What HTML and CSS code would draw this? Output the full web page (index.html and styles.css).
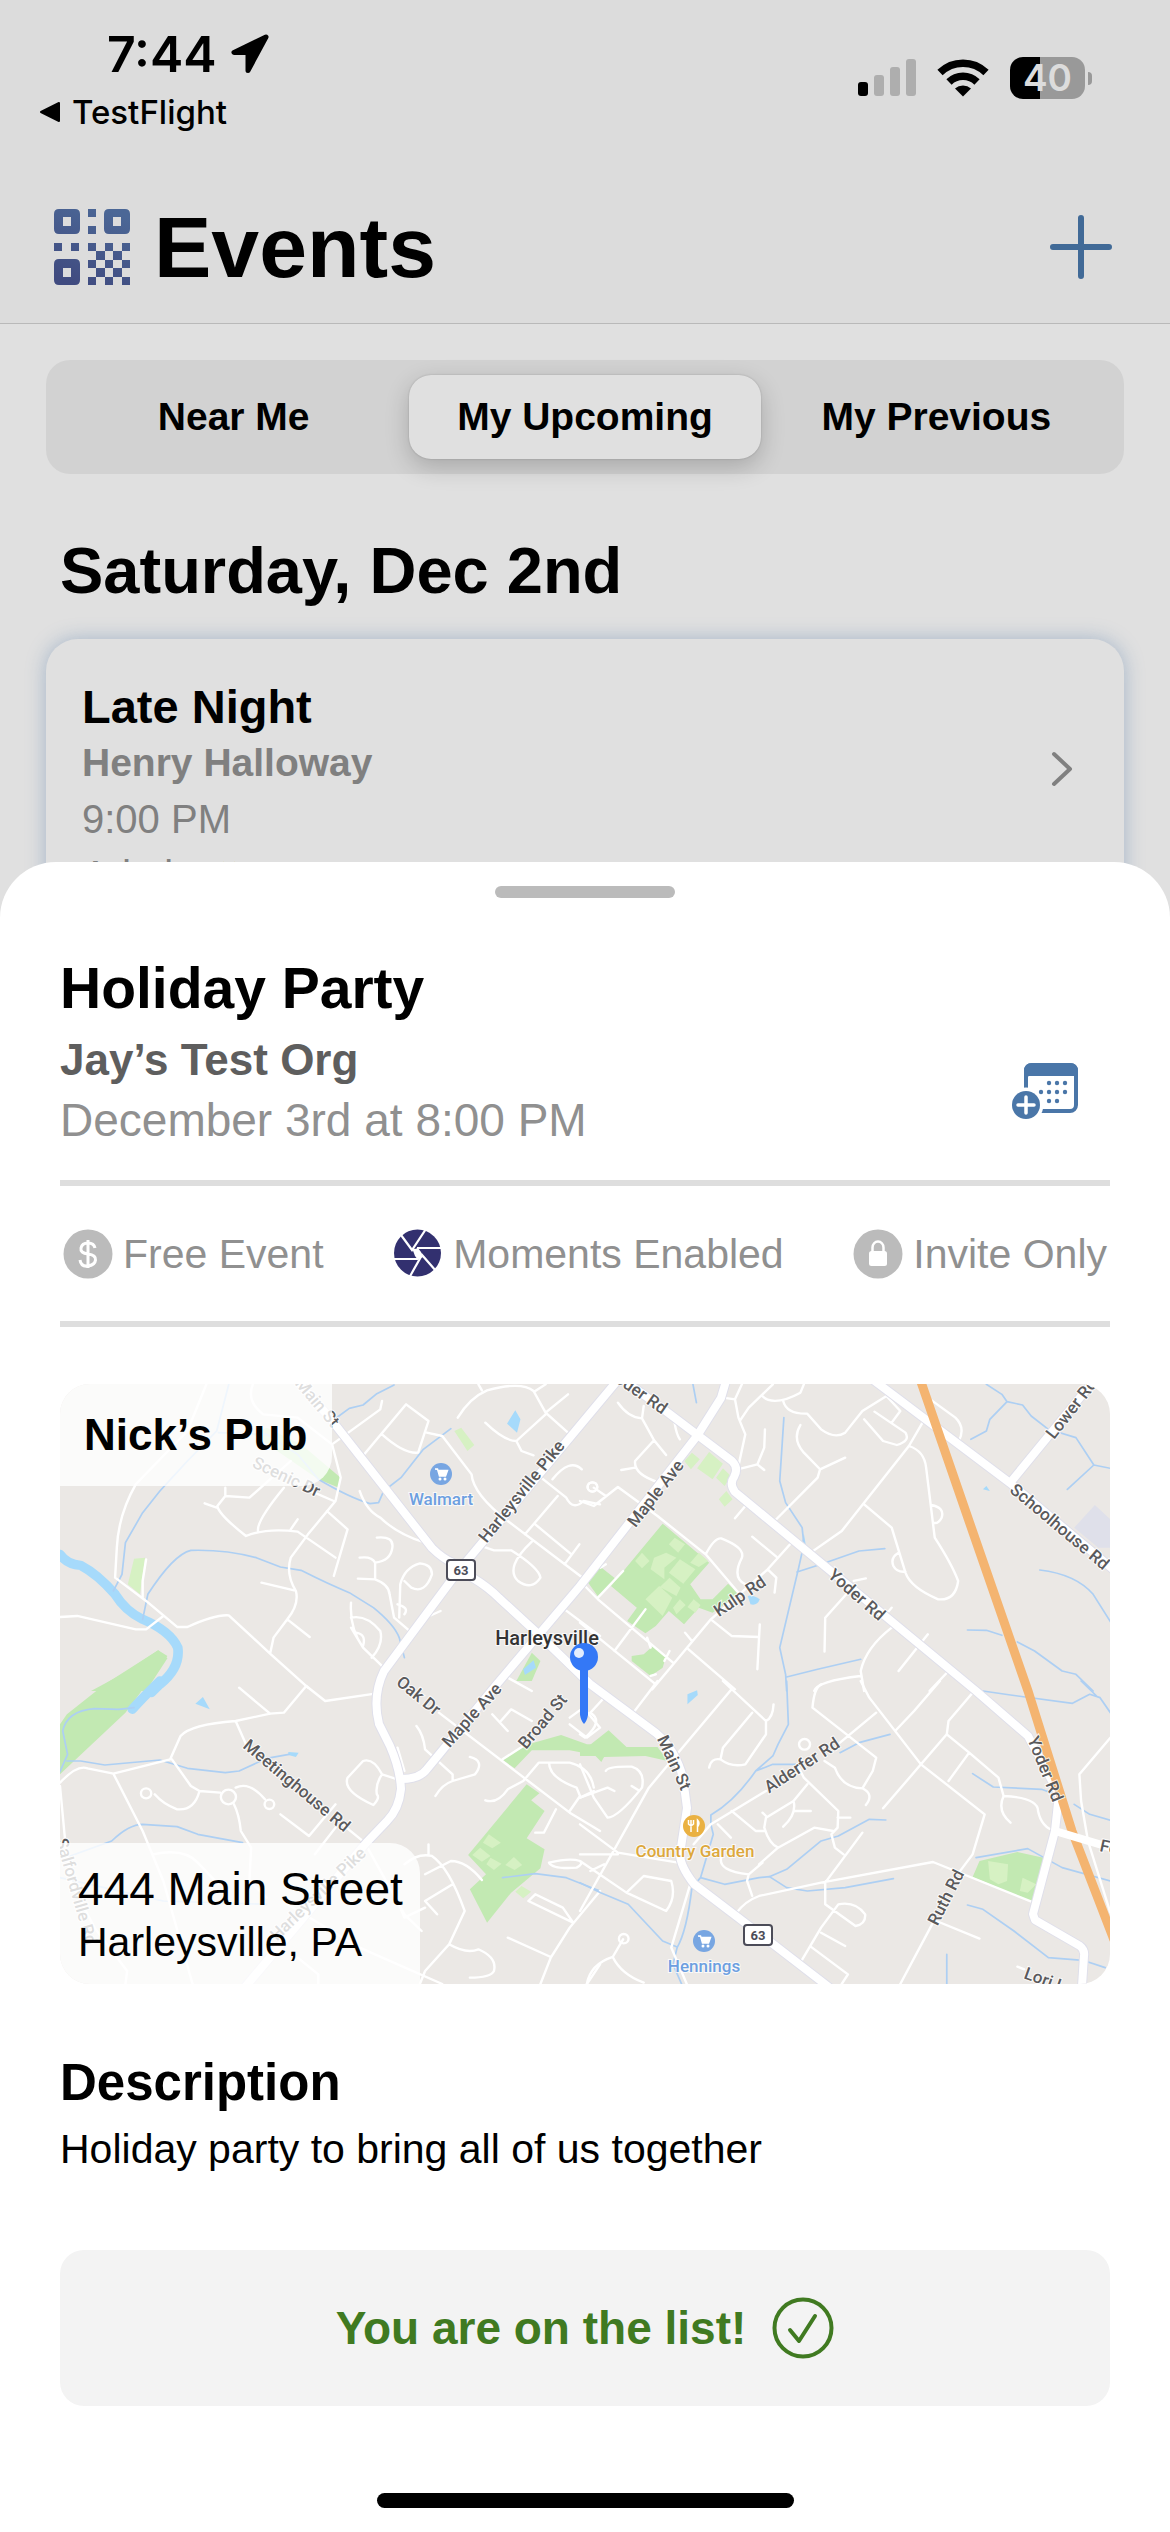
FILE: index.html
```html
<!DOCTYPE html>
<html lang="en">
<head>
<meta charset="utf-8">
<meta name="viewport" content="width=device-width, initial-scale=1">
<title>Events</title>
<link rel="stylesheet" href="styles.css">
</head>
<body>
<div class="app">
  <div class="page">
    <div class="status">
      <div class="status-left">
        <div class="clock">7:44
          <svg width="42" height="42" viewBox="0 0 42 42" aria-hidden="true"><path d="M37 4 5 19.500h14v18L37 4Z" fill="#000" stroke="#000" stroke-width="5" stroke-linejoin="round"/></svg>
        </div>
        <a class="back" href="#"><svg width="22" height="22" viewBox="0 0 22 22" aria-hidden="true"><path d="M20 2v18L2 11Z" stroke="#000" stroke-width="2" stroke-linejoin="round"/></svg>TestFlight</a>
      </div>
      <div class="status-right">
        <svg width="58" height="38" viewBox="0 0 58 38" aria-hidden="true"><rect y="23" width="10" height="14" rx="3"/><g fill="#aeaeae"><rect x="16" y="16" width="10" height="21" rx="3"/><rect x="32" y="8" width="10" height="29" rx="3"/><rect x="48" width="10" height="37" rx="3"/></g></svg>
        <svg width="52" height="38" viewBox="0 0 52 38" aria-hidden="true"><g fill="none" stroke="#000" stroke-width="7.500"><path d="M3 13.500a33 33 0 0 1 46 0"/><path d="M12 23a20 20 0 0 1 28 0"/></g><path d="M18 29.500a12 12 0 0 1 16 0L26 37.500Z"/></svg>
        <div class="battery"><span class="battery-level">40</span><span class="battery-nub"></span></div>
      </div>
    </div>
    <header class="header">
      <svg width="76" height="76" viewBox="0 0 76 76" aria-hidden="true">
        <defs><linearGradient id="qr" x1=".7" y1="0" x2=".3" y2="1"><stop offset="0" stop-color="#4b6796"/><stop offset="1" stop-color="#404b80"/></linearGradient></defs>
        <path fill="url(#qr)" fill-rule="evenodd" d="M5 0h16q5 0 5 5v15q0 5-5 5H5q-5 0-5-5V5q0-5 5-5Zm4 8v9h8V8ZM55 0h16q5 0 5 5v15q0 5-5 5H55q-5 0-5-5V5q0-5 5-5Zm4 8v9h8V8ZM5 50h16q5 0 5 5v16q0 5-5 5H5q-5 0-5-5V55q0-5 5-5Zm4 9v9h8v-9ZM34 0h8v8h-8ZM34 17h8v8h-8ZM0 34h8v8H0ZM17 34h8v8h-8ZM34 34h8v8h-8ZM51 34h8v8h-8ZM68 34h8v8h-8ZM42 42h9v9h-9ZM59 42h9v9h-9ZM34 51h8v8h-8ZM51 51h8v8h-8ZM68 51h8v8h-8ZM42 59h9v9h-9ZM59 59h9v9h-9ZM34 68h8v8h-8ZM51 68h8v8h-8ZM68 68h8v8h-8Z"/>
      </svg>
      <h1>Events</h1>
      <button class="icon-button" type="button" aria-label="Add event"><svg width="64" height="64" viewBox="0 0 64 64" aria-hidden="true"><path d="M32 3v58M4 32h56" stroke="#416a97" stroke-width="6" stroke-linecap="round"/></svg></button>
    </header>
    <div class="tabs" role="tablist">
      <button type="button" role="tab" aria-selected="false">Near Me</button>
      <button type="button" role="tab" aria-selected="true">My Upcoming</button>
      <button type="button" role="tab" aria-selected="false">My Previous</button>
    </div>
    <h2 class="day">Saturday, Dec 2nd</h2>
    <article class="event">
      <div class="event-text">
        <h3>Late Night</h3>
        <p class="host">Henry Halloway</p>
        <p>9:00 PM</p>
        <p>Admin <svg width="36" height="30" viewBox="0 0 40 30" aria-hidden="true"><path d="M3 8l8 7 5-14 4 12 8-12 3 14 7-7-4 20H6Z" fill="#d8c94a"/></svg></p>
      </div>
      <svg class="chevron" width="24" height="38" viewBox="0 0 24 38" aria-hidden="true"><path d="M4 4 20 19 4 34" fill="none" stroke="#808080" stroke-width="4" stroke-linecap="round" stroke-linejoin="round"/></svg>
    </article>
  </div>

  <section class="sheet" role="dialog" aria-label="Holiday Party">
    <div class="grabber"></div>
    <div class="summary">
      <div>
        <h2>Holiday Party</h2>
        <p class="org">Jay’s Test Org</p>
        <p class="when">December 3rd at 8:00 PM</p>
      </div>
      <button class="icon-button" type="button" aria-label="Add to calendar">
        <svg width="66" height="56" viewBox="0 0 66 56" aria-hidden="true">
          <rect x="14" y="2" width="50" height="46" rx="6" fill="#fff" stroke="#4a76a8" stroke-width="4"/>
          <path d="M12 8q0-8 8-8h38q8 0 8 8v8l-4-3H17l-5 3Z" fill="#4a76a8"/>
          <g fill="#4a76a8"><circle cx="37" cy="20" r="2.200"/><circle cx="45" cy="20" r="2.200"/><circle cx="53" cy="20" r="2.200"/><circle cx="29" cy="29" r="2.200"/><circle cx="37" cy="29" r="2.200"/><circle cx="45" cy="29" r="2.200"/><circle cx="53" cy="29" r="2.200"/><circle cx="37" cy="38" r="2.200"/><circle cx="45" cy="38" r="2.200"/></g>
          <circle cx="14" cy="42" r="17.500" fill="#fff"/><circle cx="14" cy="42" r="14" fill="#4a76a8"/>
          <path d="M14 34v16M6 42h16" stroke="#fff" stroke-width="3.500" stroke-linecap="round"/>
        </svg>
      </button>
    </div>
    <ul class="facts">
      <li><svg width="50" height="50" viewBox="0 0 50 50" aria-hidden="true"><circle cx="25" cy="25" r="24.500" fill="#bbb"/><path d="M32 19q-1-5-7-5t-7 5 7 6 7.500 6-7.500 6-8-6M25 11v28" fill="none" stroke="#fff" stroke-width="3"/></svg>Free Event</li>
      <li><svg width="50" height="50" viewBox="0 0 50 50" aria-hidden="true"><circle cx="24.500" cy="24" r="23.500" fill="#32306f"/><path d="M8 6 19 21 33 0M49 19H24M43 42 29 26 16 49M0 30H25" fill="none" stroke="#fff" stroke-width="2.200"/><path d="M19 19 22 20 25 19 28 23 30.500 28 27 29 25 31 22 27Z" fill="#fff"/></svg>Moments Enabled</li>
      <li><svg width="50" height="50" viewBox="0 0 50 50" aria-hidden="true"><circle cx="25" cy="25" r="24.500" fill="#bbb"/><rect x="16" y="22" width="18" height="15" rx="2.500" fill="#fff"/><path d="M19.500 23v-4.500a5.500 6 0 0 1 11 0V23" fill="none" stroke="#fff" stroke-width="2.500"/></svg>Invite Only</li>
    </ul>

    <div class="map">
      <svg class="map-canvas" viewBox="0 0 1050 600" preserveAspectRatio="xMidYMid slice" role="img" aria-label="Map of Harleysville">
        <defs>
          <g id="cart"><path d="M-6-5h2.500l2 7h6l2-5.500h-9" fill="#fff" stroke="#fff" stroke-width="1.500"/><circle cx="-1" cy="5" r="1.500" fill="#fff"/><circle cx="4" cy="5" r="1.500" fill="#fff"/></g>
        </defs>
        <rect width="1050" height="600" fill="#ebe8e5"/>
        <!-- northwest tile -->
        <g transform="translate(0 -3) scale(.3444 .3333)">
          <path class="park" d="M600 140 700 190 815 290 810 320 750 295 560 160ZM90 930 180 880 285 808 312 832 250 930ZM1535 600 1568 560V650Z"/>
          <path class="park" d="M1370 815 1395 840 1370 900H1325Z"/>
          <path class="lawn" d="M1145 150 1165 140 1203 192 1183 210ZM215 533 247 530 232 640 197 610Z"/>
          <path class="lake" d="M1322 88 1337 115 1327 155 1298 128ZM1345 865 1375 838 1382 860 1350 882Z"/>
          <path class="river" d="M0 520Q20 550 60 553 110 580 160 640 190 690 240 715 320 750 342 800 350 860 290 910L265 935"/>
          <path class="creek" d="M490 10 455 150 370 240 290 330 240 395 190 485 180 580 155 630M240 715 255 640Q330 520 380 508 480 505 570 530L640 558 700 568Q780 610 840 635L910 680Q970 730 985 770L1000 830M970 12 920 38 880 72 840 82 790 120M1135 143 1055 205 990 290 940 330 925 365 900 368Q840 350 750 295L690 220 600 160 460 155"/>
          <path class="street" d="M425 10 370 150 220 310Q170 400 165 500L160 590 250 660 340 738 370 738Q450 700 490 703L560 770 610 818 720 920M250 535 240 600 240 650M0 708 50 705 220 745 250 745 300 705M560 10Q540 60 590 100L690 110 790 190 815 290 800 360 720 460 670 530Q655 580 685 630 695 670 660 715L620 770 610 818M660 715 725 768M585 605 680 628M480 320 480 345 457 375Q460 400 540 465 600 440 690 452M480 345 550 350 670 240M420 367 455 380M690 452 800 530M575 450Q570 420 650 320M670 445 690 415M775 390 835 445 795 585M705 320 795 360M790 190 930 85 935 60M875 230 1005 70 1070 120 1040 215Q1000 220 935 160M1065 155 1110 165 1195 280Q1200 340 1300 420L1530 600M1155 110Q1190 50 1240 28 1340 0 1375 30L1410 95 1475 155M1215 10 1225 28M1380 30 1410 10M1410 95 1475 40M1235 125Q1290 180 1325 180L1410 100M1325 180 1340 210 1375 223M1385 280 1470 350Q1490 390 1520 360L1568 370M1430 295Q1480 230 1515 265M1350 460 1445 345M1380 430 1485 520M1465 550 1508 490M1210 490 1260 508 1310 508Q1390 560 1395 590 1370 630 1330 600 1290 560 1370 482M870 330Q890 390 930 410 980 460 1060 485M920 470Q970 465 965 500 960 540 915 545 905 525 870 530M915 545 915 595 865 593M915 595Q955 610 957 640L970 710 1015 750M985 710 988 610Q1000 560 1045 547 1080 550 1080 580 1060 640 1020 620L1000 600M980 670Q1015 680 1000 700M845 665Q840 740 880 800M845 710Q890 700 930 750 940 790 905 830M860 755Q890 760 880 795M845 740 880 800 940 860M1040 720 1105 690M1465 685 1568 765M1300 890 1370 930"/>
          <circle class="street" cx="1546" cy="318" r="14"/>
        </g>
        <!-- northeast tile -->
        <g transform="translate(520 -3) scale(.3444 .3333)">
          <path class="park" d="M240 428 375 545 320 610 350 655 385 655 430 608 460 640 385 695 345 680 302 730 258 690 220 735 190 757 137 720 165 680 90 615ZM20 600 60 558 105 595 55 650ZM150 825 185 820 212 795 250 825 240 860 205 885 150 840Z"/>
          <path class="lawn" d="M325 215 348 235 322 265 303 240ZM375 213 415 248 385 295 340 262ZM415 262 438 285 420 315 395 290ZM425 330 443 355 420 377 403 355ZM180 515 202 540 180 562 160 540ZM275 470 305 490 285 515 258 490ZM345 515 372 540 345 558 320 545ZM215 530 250 515 280 530 245 560 245 595 205 565ZM290 535 335 565 300 608 258 575ZM260 590 292 620 280 645 232 618ZM190 655 230 615 268 650 240 705ZM290 655 307 672 280 700 270 680ZM330 655 350 672 335 695 312 678Z"/>
          <path class="lake" d="M650 458 657 500 642 500ZM1170 325 1180 315 1190 330ZM487 645Q500 640 522 655 515 675 495 670Z"/>
          <path fill="#dfe0ea" d="M1495 372 1540 415V500H1505L1435 440Z"/>
          <path class="creek" d="M328 10 338 65M592 110 580 300 597 365 645 440 650 490 635 560 580 800 597 880 600 930M630 573 700 550 810 510 885 503M600 888 690 865 815 835M1180 10 1225 40 1240 62 1190 115 1180 150 1135 175M1240 62 1285 72 1310 105 1360 145 1440 170 1492 252 1540 262M1492 252 1415 325M1335 567Q1440 580 1490 640L1540 722M1125 747 1180 748 1225 763M1270 783 1320 810 1400 870 1440 880 1490 930"/>
          <path class="street" d="M110 65Q140 110 180 112L215 178 250 222M180 112 185 75M215 178 160 240Q155 280 230 305M120 267 160 260M275 127Q280 160 290 175M415 50 450 55 470 10M450 55 460 110 480 160 458 265 515 250 535 200 537 145M515 250 535 267M465 118 490 80 560 10M527 43Q560 80 640 35L650 10M590 60Q600 100 660 98L700 145Q740 175 770 155L820 90 890 45M640 132Q615 175 650 215L697 265 690 290 565 420M697 265 770 230M1000 115 955 195 760 450 670 515M855 92 945 155Q960 180 920 192L880 180 825 115M890 45 930 90 905 125M955 195Q1000 210 1005 260L1030 470Q1080 550 1098 600 1090 660 1040 655 960 620 945 575L905 440 825 370M1020 372Q1060 380 1050 410 1040 430 1025 425M925 515Q900 530 910 555 920 575 945 572M1010 50 1090 110Q1120 140 1100 180M0 360 40 375 110 318 225 405 365 520 460 635M40 320 75 345M365 520Q390 470 410 472 480 500 470 530 440 590 480 610M500 467 570 527M610 490 545 565 570 590 565 635M545 565 380 715 210 925M380 715 440 765 520 768M522 730 515 865M450 412 480 375M60 560 75 550M125 570 52 650M0 600 52 655 270 845M0 725 220 910M100 810 190 685M315 805 450 925M305 755 325 780M795 600 830 592M790 620 712 710 710 812M885 705 905 680M905 740Q830 800 815 870L825 930M815 885Q690 900 680 930M1010 760 925 870M1070 870 1015 930M195 770 205 800M245 840 260 810M205 885 220 880"/>
          <circle class="street" cx="36" cy="318" r="14"/>
        </g>
        <!-- southwest tile -->
        <g transform="translate(0 297) scale(.3444 .3333)">
          <path class="park" d="M285-92 130 10 20 100 0 130V280L190 95 312-75ZM1283 235 1360 190 1455 162 1530 190 1568 190V225L1480 208 1370 208 1320 262ZM1355 310 1392 337 1368 358 1407 390 1355 472 1407 505 1395 562 1310 635 1240 725 1190 625 1237 580 1185 522Z"/>
          <path class="lawn" d="M1245 460 1280 485 1255 502 1228 485ZM1220 500 1250 525 1225 542 1197 522ZM1250 530 1282 548 1260 567 1238 550ZM1318 528 1342 552 1320 567 1293 552ZM1340 615 1368 632 1345 652 1322 632Z"/>
          <path class="lake" d="M415 48 435 85 393 68ZM663 213 693 215 685 228 663 222Z"/>
          <path class="river" d="M290 0Q240 50 210 85"/>
          <path class="creek" d="M215 80 170 85 100 83Q20 90 8 150L22 220 0 272M20 240 60 240 130 252 290 237 370 262 480 275 520 270 600 232 665 220M30 525 150 480Q200 430 240 430L340 437 400 460 530 485M1285 590 1380 578 1470 590 1568 630M0 590 300 660 600 670"/>
          <path class="street" d="M0 305Q50 250 80 262L155 278 320 235 350 165Q380 130 510 120L610 98 650 95 715 15 770 60 915 38M520 20 610 98M510 120 540 190M155 278 240 450 300 600 385 909M0 315 15 480 30 600 100 740 195 870 190 909M325 235 380 315 405 330 465 335M405 330Q390 390 340 385 300 370 275 340M510 320Q550 300 595 355M505 370Q520 400 525 450L555 500 550 600 600 650M640 400 723 465 800 370M800 440 740 520M820 430 885 485 1000 700 1050 750M270 520Q360 500 400 545L460 610M1035 135Q1055 160 1060 205L1140 280 1140 300Q1110 310 1090 345M1140 300 1205 280Q1235 240 1190 228M980 295 935 280Q910 230 880 240L835 290Q820 330 910 372 930 350 920 340 915 310 935 280M1100 95 1480 395 1568 450M1255 100 1300 150M1280 120 1310 85 1370 120M1285 235 1345 195M1235 358Q1270 370 1300 325L1345 300 1390 245 1480 245Q1540 260 1550 320M1420 245Q1420 290 1500 320L1510 345 1480 390M1440 385 1405 455 1380 455M1550 330 1510 350M980 200 1000 270M1000 550Q1040 515 1080 525 1130 560 1175 690L1130 790 1060 870 1045 909M1060 580 1135 540Q1180 540 1225 597M1070 490V520M1060 660 1140 610M1060 660 1095 700M980 660 1000 710 1060 680M1130 790Q1180 820 1215 805 1270 830 1260 870 1250 890 1190 890M1360 660 1380 640 1460 680 1490 725 1360 660M1568 630 1480 740 1425 830 1395 909M1300 770 1425 828M1568 850 1530 909M1420 545Q1430 565 1500 560 1520 550 1510 540 1480 530 1420 545M1480 110 1520 80 1568 140 1530 170 1480 130M660 670 870 800 1110 909M690 830 750 880V909"/>
          <g class="street"><circle cx="250" cy="337" r="15"/><circle cx="489" cy="348" r="22"/><circle cx="608" cy="370" r="14"/></g>
        </g>
        <!-- southeast tile -->
        <g transform="translate(520 297) scale(.3444 .3333)">
          <path class="park" d="M0 195H25L83 148 135 198H225L255 240 190 225 70 228 62 243 45 225H0ZM1160 540 1270 513 1352 532 1318 665 1140 588Z"/>
          <path class="lawn" d="M1185 540 1243 550 1240 600 1215 610 1190 595ZM1285 590 1325 610 1300 635 1277 630Z"/>
          <path class="lake" d="M312 40 340 28 342 42 312 70Z"/>
          <path class="creek" d="M600 0 605 130 575 190 560 225 510 270Q450 360 380 402V430L387 460Q370 520 350 590L325 620Q310 750 282 800L270 850 295 909M510 270 560 250 630 250M755 215 810 185 900 160M350 590 420 610 520 590 550 587 600 565 700 480 750 465 840 415 888 417M550 587 600 620 660 630 770 620 910 593M0 605 60 635 140 670 240 780 282 798M1140 278 1200 318 1340 325 1380 340M1170 30 1250 42 1430 67 1480 40 1510 50 1540 95M1455 0 1500 45M1435 370 1480 400 1540 418M1150 530 1300 503 1400 560 1540 600M1125 672 1170 685 1260 750 1360 830 1460 838 1525 860M1065 820V909"/>
          <path class="street" d="M225 0 155 95M415 0 540 120 540 160 480 250Q440 260 408 235L415 200 500 95M375 260Q380 230 408 235M540 120Q560 110 562 70M440 25 200 320 0 690M70 50 30 95Q70 120 15 170L0 160M0 250 40 350 80 410Q110 410 180 320 190 270 150 257 80 255 75 270M0 350 80 320 100 330M150 315 170 328M0 430 110 515 285 545M110 520 0 520M0 540 135 635 250 690Q280 650 265 600L185 585 135 635M30 570 70 550M700 10Q680 20 675 80L860 230 850 270 820 322Q760 320 740 260L710 240M820 322Q855 340 830 372M815 0 840 50 990 250 1175 400 1140 520 1100 575M1045 0 970 90 915 150M860 95 755 185M1140 35 1070 120 1065 160 990 250 880 382M1065 160 1130 215 1215 290 1230 345Q1330 350 1330 390 1340 440 1380 450M1130 215 1070 300M1230 345Q1210 390 1250 425M650 290 750 390 748 440 730 460 740 500 765 520M748 410 785 410M540 330 380 430 330 490M660 310 620 360 540 410 535 440Q550 490 575 500L520 550M575 500 680 440 735 450M620 360Q630 400 590 437M620 390H670M440 390 510 450 535 450M400 430 438 470M530 395 540 405M410 530Q400 570 490 580M490 580 530 545M490 580 485 600 500 645M455 695Q480 660 520 645L700 605 1025 543 1318 665M820 455 712 605V670L800 735Q830 730 828 700 800 660 750 670L700 740 640 845M700 755 770 795M670 797 778 880 760 909M1035 720 1160 773M1025 725 930 909M320 610 265 800 310 909M20 909Q30 850 95 828L125 775M95 828Q120 880 185 905M1540 170 1450 280 1455 360 1475 480 1540 695M1270 857 1290 865M630 250 650 290"/>
          <g class="street"><circle cx="127" cy="773" r="14"/><circle cx="652" cy="190" r="16"/></g>
        </g>
        <!-- main roads: casing first, then fill -->
        <g class="road-edge">
          <path id="road-main" d="M225-17 270 34 372 164Q382 174 393 179L413 194Q428 203 439 214L475 247 530 300 596 349Q616 366 623 394L627 424 620 470Q620 482 634 500L713 560 770 604"/>
          <path id="road-pike" d="M557-3 396 190 324 287Q312 312 319 340L330 362Q340 385 341 405 339 425 327 437L306 459 186 602"/>
          <path id="road-maple" d="M666-3 661 14 637 52 520 202 437 300 367 385Q360 395 341 395"/>
          <path id="road-yoder" d="M561-6 603 25 672 77Q679 84 674 93 669 100 675 108L916 307 968 352 999 410 995 447 973 530 975 536 1020 562Q1025 566 1024 572L1022 602"/>
          <path id="road-school" d="M812-5 950 99 1055 187M950 99 1036-6"/>
        </g>
        <g class="road">
          <use href="#road-main"/><use href="#road-pike"/><use href="#road-maple"/><use href="#road-yoder"/><use href="#road-school"/>
        </g>
        <path d="M860-5 909 137 968 307 1012 447 1054 556" fill="none" stroke="#f4b470" stroke-width="9"/>
        <path class="road" d="M995 447 1052 464"/>

        <g class="road-names">
          <text transform="translate(253 22) rotate(50)">Main St</text>
          <text transform="translate(224 98) rotate(25)">Scenic Dr</text>
          <text transform="translate(466 111) rotate(-51)">Harleysville Pike</text>
          <text transform="translate(600 113) rotate(-52)">Maple Ave</text>
          <text transform="translate(574 11) rotate(35)">Yoder Rd</text>
          <text transform="translate(683 217) rotate(-34)">Kulp Rd</text>
          <text transform="translate(793 215) rotate(41)">Yoder Rd</text>
          <text transform="translate(996 147) rotate(40)">Schoolhouse Rd</text>
          <text transform="translate(1016 28) rotate(-52)">Lower Rd</text>
          <text transform="translate(355 316) rotate(39)">Oak Dr</text>
          <text transform="translate(416 335) rotate(-48)">Maple Ave</text>
          <text transform="translate(487 341) rotate(-50)">Broad St</text>
          <text transform="translate(609 381) rotate(65)">Main St</text>
          <text transform="translate(233 406) rotate(40)">Meetinghouse Rd</text>
          <text transform="translate(262 514) rotate(-44)">Harleysville Pike</text>
          <text transform="translate(11 509) rotate(74)">Salfordville Rd</text>
          <text transform="translate(745 386) rotate(-33)">Alderfer Rd</text>
          <text transform="translate(891 516) rotate(-63)">Ruth Rd</text>
          <text transform="translate(980 387) rotate(68)">Yoder Rd</text>
          <text transform="translate(1077 475) rotate(12)">Forty Foot</text>
          <text transform="translate(996 606) rotate(20)">Lori Lane</text>
        </g>
        <g class="shields">
          <rect x="387" y="176" width="28" height="20" rx="3"/><text x="401" y="191">63</text>
          <rect x="684" y="541" width="28" height="20" rx="3"/><text x="698" y="556">63</text>
        </g>
        <g class="places">
          <circle cx="381" cy="90" r="11" fill="#78a6e2"/><use href="#cart" x="381" y="90"/>
          <text x="381" y="121" fill="#6d9fe0">Walmart</text>
          <circle cx="644" cy="557" r="11" fill="#78a6e2"/><use href="#cart" x="644" y="557"/>
          <text x="644" y="588" fill="#6d9fe0">Hennings</text>
          <circle cx="634" cy="442" r="11" fill="#eab142"/><path d="M631 436v12M628.500 436v4q2.500 3 5 0v-4M637.500 448v-12q3 3 0 7" stroke="#fff" stroke-width="1.500" fill="none"/>
          <text x="635" y="473" fill="#dda83c">Country Garden</text>
        </g>
        <text class="town" x="487" y="261">Harleysville</text>
        <path d="M520 273h8v58q-1 6-4 9-3-3-4-9Z" fill="#3478f6"/>
        <circle cx="524" cy="273" r="14" fill="#3478f6"/><circle cx="519" cy="269" r="5" fill="#e4edfd"/>
      </svg>
      <h3 class="venue">Nick’s Pub</h3>
      <address class="address"><span class="street-line">444 Main Street</span><span>Harleysville, PA</span></address>
    </div>

    <h3 class="about-title">Description</h3>
    <p class="about">Holiday party to bring all of us together</p>
    <button class="rsvp" type="button">You are on the list!
      <svg width="62" height="62" viewBox="0 0 62 62" fill="none" stroke="#407a21" stroke-width="4" stroke-linecap="round" stroke-linejoin="round" aria-hidden="true"><circle cx="31" cy="31" r="28.500"/><path d="M18 33l9 11L43 19"/></svg>
    </button>
    <div class="home-bar"></div>
  </section>
</div>
</body>
</html>
```
FILE: styles.css
```css
* {
  box-sizing: border-box;
}

body {
  margin: 0;
  background: #e0e0e0;
  color: #000;
  font-family: "Liberation Sans", Arial, Helvetica, sans-serif;
}

h1, h2, h3, p, ul {
  margin: 0;
  padding: 0;
}

button {
  border: 0;
  background: none;
  color: inherit;
  font: inherit;
  cursor: pointer;
}

svg {
  display: block;
  flex: none;
}

.app {
  position: relative;
  min-height: 100vh;
  overflow: hidden;
}

/* status bar */
.status {
  display: flex;
  align-items: center;
  justify-content: space-between;
  padding: 24px 78px 67px 39px;
  background: #dcdcdc;
  font-family: Inter, sans-serif;
}

.status-left {
  display: flex;
  flex-direction: column;
  gap: 8px;
}

.clock {
  display: flex;
  align-items: center;
  gap: 12px;
  padding-left: 68px;
  font-size: 50px;
  font-weight: 600;
  line-height: 60px;
}

.back {
  display: flex;
  align-items: center;
  gap: 11px;
  color: inherit;
  font-size: 33px;
  font-weight: 500;
  line-height: 40px;
  text-decoration: none;
}

.status-right {
  display: flex;
  align-items: center;
  gap: 21px;
}

.battery {
  display: flex;
  align-items: center;
  gap: 3px;
}

.battery-level {
  width: 75px;
  border-radius: 13px;
  background: linear-gradient(90deg, #000 40%, #999 40%);
  color: #dcdcdc;
  font-size: 37px;
  font-weight: 600;
  line-height: 42px;
  text-align: center;
}

.battery-nub {
  width: 4px;
  height: 13px;
  border-radius: 0 4px 4px 0;
  background: #999;
}

/* events page */
.header {
  display: flex;
  align-items: center;
  gap: 24px;
  padding: 0 57px 28px 54px;
  border-bottom: 1px solid #b9b9b9;
  background: #dcdcdc;
}

.header h1 {
  flex: 1;
  font-size: 86px;
  line-height: 96px;
}

.icon-button {
  padding: 0;
}

.tabs {
  display: grid;
  grid-template-columns: repeat(3, 1fr);
  margin: 36px 46px 0;
  padding: 15px 12px;
  border-radius: 24px;
  background: #d2d2d2;
}

.tabs button {
  padding: 0;
  border-radius: 22px;
  font-size: 39px;
  font-weight: 700;
  line-height: 84px;
}

.tabs button[aria-selected="true"] {
  background: #e0e0e0;
  box-shadow: 0 8px 24px rgba(0, 0, 0, .2), 0 0 2px rgba(0, 0, 0, .2);
}

.day {
  margin: 59px 60px 30px;
  font-size: 65px;
  line-height: 76px;
}

.event {
  display: flex;
  justify-content: space-between;
  margin: 0 46px;
  padding: 40px 50px 40px 36px;
  border-radius: 32px;
  background: #e0e0e0;
  box-shadow: 0 0 20px rgba(74, 118, 168, .4);
  color: #808080;
  font-size: 40px;
  line-height: 56px;
}

.event h3 {
  color: #000;
  font-size: 47px;
}

.event p {
  display: flex;
  align-items: flex-end;
  gap: 14px;
}

.event .host {
  font-size: 39px;
  font-weight: 700;
}

.event p svg {
  margin-bottom: 14px;
}

.chevron {
  margin-top: 71px;
}

/* event sheet */
.sheet {
  position: absolute;
  right: 0;
  bottom: 0;
  left: 0;
  display: flex;
  flex-direction: column;
  padding: 24px 60px;
  border-radius: 56px 56px 0 0;
  background: #fff;
}

.grabber {
  align-self: center;
  width: 180px;
  height: 12px;
  margin-bottom: 56px;
  border-radius: 6px;
  background: #bbb;
}

.summary {
  display: flex;
  align-items: flex-end;
  justify-content: space-between;
  padding: 0 32px 30px 0;
  border-bottom: 6px solid #dedede;
}

.summary h2 {
  margin-bottom: 8px;
  font-size: 57px;
  line-height: 68px;
}

.summary p {
  line-height: 60px;
}

.summary .icon-button {
  padding: 31px 0;
}

.org {
  color: #5e5e5e;
  font-size: 44px;
  font-weight: 700;
}

.when {
  color: #909090;
  font-size: 46px;
}

.facts {
  display: flex;
  justify-content: space-between;
  padding: 43px 3px 42px;
  border-bottom: 6px solid #dedede;
  color: #909090;
  font-size: 41px;
  line-height: 50px;
  list-style: none;
}

.facts li {
  display: flex;
  gap: 10px;
}

/* map */
.map {
  position: relative;
  margin-top: 57px;
  border-radius: 30px;
  overflow: hidden;
}

.map-canvas {
  width: 100%;
  height: 600px;
}

.venue,
.address {
  position: absolute;
  left: 0;
  background: rgba(255, 255, 255, .8);
}

.venue {
  top: 0;
  padding: 22px 25px 22px 24px;
  border-bottom-right-radius: 30px;
  font-size: 44px;
  line-height: 58px;
}

.address {
  bottom: 0;
  display: flex;
  flex-direction: column;
  padding: 20px 17px 15px 18px;
  border-top-right-radius: 30px;
  font-size: 41px;
  font-style: normal;
  line-height: 53px;
}

.street-line {
  font-size: 46px;
}

.park {
  fill: #c2e9b2;
}

.lawn {
  fill: #d6f1c3;
}

.lake {
  fill: #a6dafb;
}

.river,
.creek,
.street,
.road,
.road-edge {
  fill: none;
  stroke-linejoin: round;
  stroke-linecap: round;
}

.river {
  stroke: #a6dafb;
  stroke-width: 28;
}

.creek {
  stroke: #adcff3;
  stroke-width: 5;
}

.street {
  stroke: #fff;
  stroke-width: 7;
}

.road {
  stroke: #fff;
  stroke-width: 8;
}

.road-edge {
  stroke: #dfdfea;
  stroke-width: 10;
}

.road-names text,
.shields text,
.places text,
.town {
  font-family: Roboto, sans-serif;
  font-weight: 500;
  text-anchor: middle;
  paint-order: stroke;
  stroke: rgba(255, 255, 255, .8);
  stroke-width: 2;
}

.road-names text {
  fill: #5a5a5c;
  font-size: 17px;
}

.shields rect {
  fill: #fff;
  stroke: #4c4c58;
  stroke-width: 2;
}

.shields text {
  fill: #4c4c58;
  font-size: 13px;
  font-weight: 700;
}

.places text {
  font-size: 17px;
}

.town {
  fill: #333;
  font-size: 20px;
}

/* description and RSVP */
.about-title {
  margin: 69px 0 8px;
  font-size: 51px;
  line-height: 60px;
}

.about {
  font-size: 41px;
  line-height: 56px;
}

.rsvp {
  display: flex;
  align-items: center;
  justify-content: center;
  gap: 26px;
  margin: 73px 0 87px;
  padding: 47px 0;
  border-radius: 24px;
  background: #f3f3f3;
  color: #407a21;
  font-size: 46px;
  font-weight: 700;
  line-height: 62px;
}

.home-bar {
  align-self: center;
  width: 417px;
  height: 15px;
  border-radius: 8px;
  background: #000;
}
```
